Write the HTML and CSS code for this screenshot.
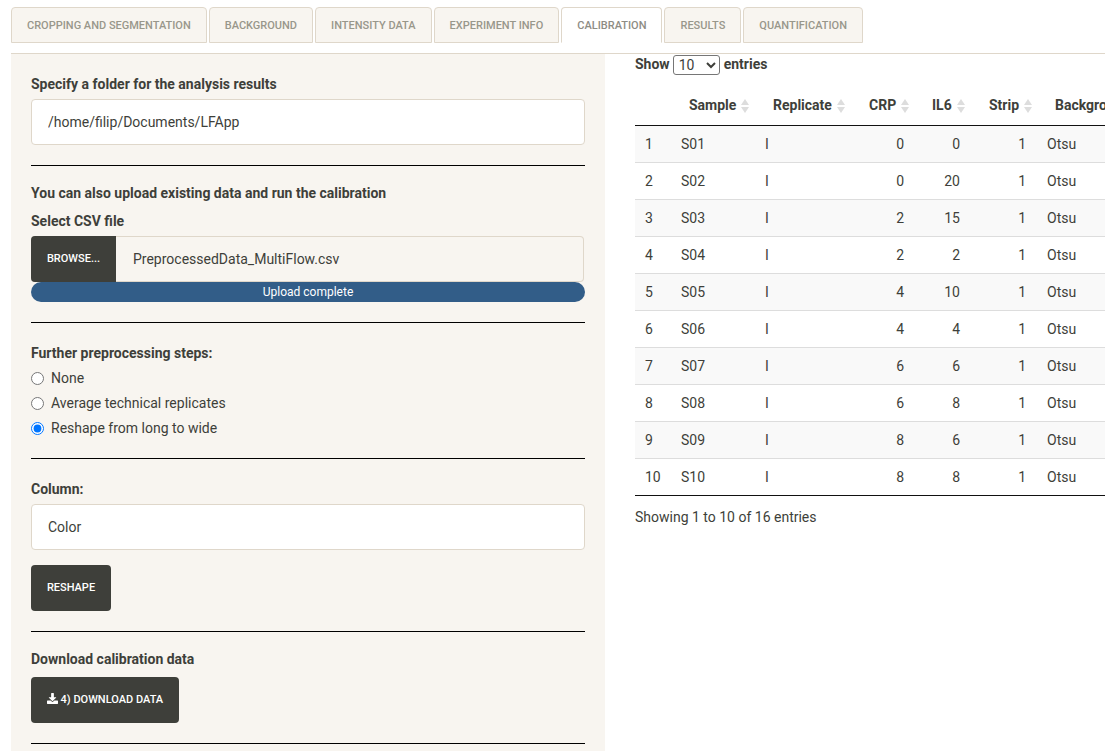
FILE: index.html
```html
<!DOCTYPE html>
<html lang="en">
<head>
    <meta charset="UTF-8">
    <meta name="viewport" content="width=device-width, initial-scale=1.0">
    <title>Calibration</title>
    <link rel="stylesheet" href="styles.css">
</head>
<body>
    <ul class="tabs">
        <li class="tab">Cropping and segmentation</li>
        <li class="tab">Background</li>
        <li class="tab">Intensity data</li>
        <li class="tab">Experiment info</li>
        <li class="tab active">Calibration</li>
        <li class="tab">Results</li>
        <li class="tab">Quantification</li>
    </ul>

    <div class="content">
        <form class="sidebar">
            <label class="field-label" for="folder">Specify a folder for the analysis results</label>
            <input class="text-input" type="text" id="folder" value="/home/filip/Documents/LFApp">
            <hr class="rule rule-first">

            <div class="field-label upload-title">You can also upload existing data and run the calibration</div>
            <div class="field-label csv-label">Select CSV file</div>
            <div class="file-group">
                <span class="browse">Browse...</span>
                <span class="file-name">PreprocessedData_MultiFlow.csv</span>
            </div>
            <div class="progress">Upload complete</div>
            <hr class="rule rule-upload">

            <div class="field-label steps-label">Further preprocessing steps:</div>
            <label class="radio"><input type="radio" name="steps"><span>None</span></label>
            <label class="radio"><input type="radio" name="steps"><span>Average technical replicates</span></label>
            <label class="radio"><input type="radio" name="steps" checked><span>Reshape from long to wide</span></label>
            <hr class="rule rule-steps">

            <label class="field-label column-label" for="column">Column:</label>
            <input class="text-input" type="text" id="column" value="Color">
            <button class="btn btn-reshape" type="button">Reshape</button>
            <hr class="rule rule-reshape">

            <div class="field-label download-label">Download calibration data</div>
            <button class="btn btn-download" type="button">
                <svg class="icon" viewBox="0 0 512 512" width="11" height="11"><path fill="currentColor" d="M216 0h80c13 0 24 11 24 24v168h88c18 0 27 21 14 34L270 378c-8 8-20 8-28 0L90 226c-13-13-4-34 14-34h88V24c0-13 11-24 24-24zm296 376v112c0 13-11 24-24 24H24c-13 0-24-11-24-24V376c0-13 11-24 24-24h147l49 49c20 20 52 20 72 0l49-49h147c13 0 24 11 24 24z"/></svg>
                4) Download data
            </button>
            <hr class="rule rule-last">
        </form>

        <div class="main">
            <div class="length-row">
                <span>Show</span>
                <select class="length-select"><option>10</option><option>25</option><option>50</option></select>
                <span>entries</span>
            </div>
            <div class="table-wrap">
                <table class="data-table">
                    <thead>
                        <tr>
                            <th class="col-id"></th>
                            <th class="col-sample"><span class="head">Sample<i class="sort"></i></span></th>
                            <th class="col-rep"><span class="head">Replicate<i class="sort"></i></span></th>
                            <th class="col-crp"><span class="head">CRP<i class="sort"></i></span></th>
                            <th class="col-il6"><span class="head">IL6<i class="sort"></i></span></th>
                            <th class="col-strip"><span class="head">Strip<i class="sort"></i></span></th>
                            <th class="col-bg"><span class="head">Background<i class="sort"></i></span></th>
                        </tr>
                    </thead>
                    <tbody>
                        <tr><td>1</td><td>S01</td><td>I</td><td class="num">0</td><td class="num">0</td><td class="num">1</td><td>Otsu</td></tr>
                        <tr><td>2</td><td>S02</td><td>I</td><td class="num">0</td><td class="num">20</td><td class="num">1</td><td>Otsu</td></tr>
                        <tr><td>3</td><td>S03</td><td>I</td><td class="num">2</td><td class="num">15</td><td class="num">1</td><td>Otsu</td></tr>
                        <tr><td>4</td><td>S04</td><td>I</td><td class="num">2</td><td class="num">2</td><td class="num">1</td><td>Otsu</td></tr>
                        <tr><td>5</td><td>S05</td><td>I</td><td class="num">4</td><td class="num">10</td><td class="num">1</td><td>Otsu</td></tr>
                        <tr><td>6</td><td>S06</td><td>I</td><td class="num">4</td><td class="num">4</td><td class="num">1</td><td>Otsu</td></tr>
                        <tr><td>7</td><td>S07</td><td>I</td><td class="num">6</td><td class="num">6</td><td class="num">1</td><td>Otsu</td></tr>
                        <tr><td>8</td><td>S08</td><td>I</td><td class="num">6</td><td class="num">8</td><td class="num">1</td><td>Otsu</td></tr>
                        <tr><td>9</td><td>S09</td><td>I</td><td class="num">8</td><td class="num">6</td><td class="num">1</td><td>Otsu</td></tr>
                        <tr><td>10</td><td>S10</td><td>I</td><td class="num">8</td><td class="num">8</td><td class="num">1</td><td>Otsu</td></tr>
                    </tbody>
                </table>
            </div>
            <div class="table-info">Showing 1 to 10 of 16 entries</div>
        </div>
    </div>
</body>
</html>
```

FILE: styles.css
```css
* {
    box-sizing: border-box;
}

html, body {
    height: 751px;
    overflow: hidden;
}

body {
    margin: 0;
    padding: 7px 0 0 11px;
    font-family: Roboto, sans-serif;
    font-size: 14px;
    line-height: 21px;
    color: #3e3f3a;
    background-color: #fff;
}

.tabs {
    display: flex;
    gap: 2px;
    list-style: none;
    margin: 0;
    padding: 0 0 10px 0;
    border-bottom: 1px solid #dfd7ca;
}

.tab {
    height: 36px;
    padding: 7px 15px 0;
    font-size: 11px;
    font-weight: 500;
    text-transform: uppercase;
    color: #98978b;
    background-color: #f8f5f0;
    border: 1px solid #dfd7ca;
    border-radius: 4px 4px 0 0;
}

.tab.active {
    color: #8e8c84;
    background-color: #fff;
    border-bottom-color: #fff;
}

.content {
    display: flex;
}

.sidebar {
    flex: 0 0 594px;
    height: 698px;
    padding: 20px 20px 0;
    background-color: #f8f5f0;
}

.main {
    flex: 1;
    min-width: 0;
    padding-left: 30px;
}

.field-label {
    display: block;
    font-weight: 700;
    line-height: 21px;
}

.text-input {
    display: block;
    width: 100%;
    height: 46px;
    margin-top: 4px;
    padding: 0 16px;
    font-family: inherit;
    font-size: 14px;
    color: #3e3f3a;
    background-color: #fff;
    border: 1px solid #dfd7ca;
    border-radius: 4px;
}

.rule {
    height: 0;
    margin: 0;
    border: none;
    border-top: 1px solid #000;
}

.rule-first {
    margin-top: 20px;
}

.upload-title {
    margin-top: 17px;
}

.csv-label {
    margin-top: 7px;
}

.file-group {
    display: flex;
    height: 46px;
    margin-top: 4px;
    margin-right: 1px;
    border: 1px solid #dfd7ca;
    border-left: none;
    border-radius: 4px;
}

.browse {
    width: 85px;
    margin: -1px 0;
    font-size: 11px;
    font-weight: 500;
    line-height: 46px;
    text-align: center;
    text-transform: uppercase;
    color: #fff;
    background-color: #3e3f3a;
    border-radius: 4px 0 0 4px;
}

.file-name {
    padding-left: 17px;
    line-height: 44px;
}

.progress {
    height: 20px;
    font-size: 12px;
    line-height: 20px;
    text-align: center;
    color: #fff;
    background-color: #325d88;
    border-radius: 10px;
}

.rule-upload {
    margin-top: 20px;
}

.steps-label {
    margin-top: 20px;
    margin-bottom: 2px;
}

.radio {
    display: flex;
    align-items: center;
    height: 25px;
}

.radio input {
    width: 13px;
    height: 13px;
    margin: 0 7px 0 0;
}

.rule-steps {
    margin-top: 17px;
}

.column-label {
    margin-top: 20px;
}

.btn {
    display: block;
    height: 46px;
    padding: 0 0 2px;
    font-family: inherit;
    font-size: 11px;
    font-weight: 500;
    text-transform: uppercase;
    color: #fff;
    background-color: #3e3f3a;
    border: none;
    border-radius: 4px;
}

.btn-reshape {
    width: 80px;
    margin-top: 15px;
}

.rule-reshape {
    margin-top: 20px;
}

.download-label {
    margin-top: 17px;
}

.btn-download {
    width: 148px;
    margin-top: 7px;
}

.icon {
    vertical-align: -1px;
}

.rule-last {
    margin-top: 20px;
}

.length-row {
    display: flex;
    align-items: center;
    gap: 3px;
    height: 21px;
    font-weight: 700;
}

.length-select {
    width: 47px;
    height: 20px;
    margin-right: 1px;
    padding: 0 0 0 1px;
    font-family: inherit;
    font-size: 14px;
    color: #3e3f3a;
    background-color: #fff;
    border: 1px solid #767676;
    border-radius: 3px;
}

.table-wrap {
    margin-top: 16px;
    overflow: hidden;
}

.data-table {
    width: 620px;
    table-layout: fixed;
    border-collapse: collapse;
    border-bottom: 1px solid #111;
}

.data-table th {
    height: 34px;
    padding: 0 0 4px 18px;
    font-weight: 700;
    text-align: left;
    white-space: nowrap;
    border-bottom: 1px solid #111;
}

.data-table td {
    height: 37px;
    padding: 2px 0 0 10px;
    color: #3e3f3a;
    border-top: 1px solid #ddd;
}

.data-table td:last-child {
    padding-left: 11px;
}

.data-table tbody tr:first-child td {
    border-top: none;
}

.data-table tbody tr:nth-child(odd) {
    background-color: #f9f9f9;
}

.data-table td.num {
    padding: 2px 10px 0 0;
    text-align: right;
}

.head {
    display: inline-flex;
    align-items: center;
    gap: 5px;
}

.col-id { width: 36px; }
.col-sample { width: 84px; }
.col-rep { width: 96px; }
.col-crp { width: 63px; }
.col-il6 { width: 56px; }
.col-strip { width: 66px; }
.data-table th.col-strip { padding-left: 19px; }
.data-table th.col-bg { padding-left: 19px; }

.sort {
    display: inline-block;
    position: relative;
    width: 9px;
    height: 14px;
}

.sort::before,
.sort::after {
    content: "";
    position: absolute;
    left: 0;
    border-left: 4.5px solid transparent;
    border-right: 4.5px solid transparent;
}

.sort::before {
    top: 0;
    border-bottom: 6px solid #ddd;
}

.sort::after {
    bottom: 0;
    border-top: 6px solid #ddd;
}

.table-info {
    margin-top: 11px;
}
```
